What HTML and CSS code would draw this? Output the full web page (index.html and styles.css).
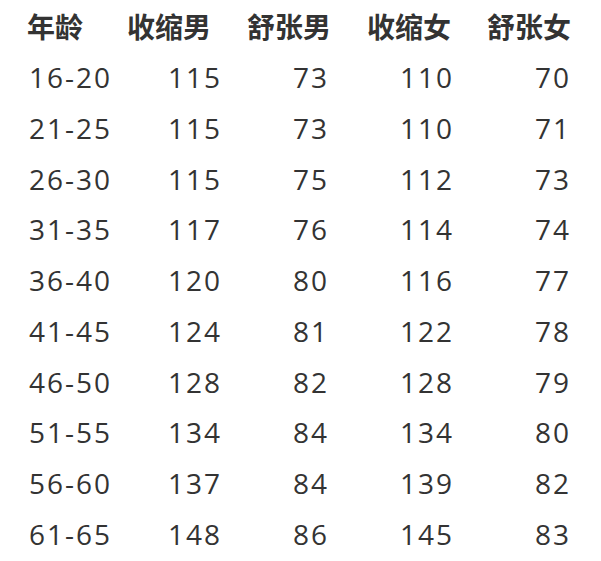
FILE: index.html
```html
<!DOCTYPE html>
<html lang="zh">
<head>
<meta charset="utf-8">
<link rel="stylesheet" href="styles.css">
</head>
<body>
<div class="table">
  <div class="th c1">年龄</div><div class="th c2">收缩男</div><div class="th c3">舒张男</div><div class="th c4">收缩女</div><div class="th c5">舒张女</div>
  <div class="td c1">16-20</div><div class="td c2">115</div><div class="td c3">73</div><div class="td c4">110</div><div class="td c5">70</div>
  <div class="td c1">21-25</div><div class="td c2">115</div><div class="td c3">73</div><div class="td c4">110</div><div class="td c5">71</div>
  <div class="td c1">26-30</div><div class="td c2">115</div><div class="td c3">75</div><div class="td c4">112</div><div class="td c5">73</div>
  <div class="td c1">31-35</div><div class="td c2">117</div><div class="td c3">76</div><div class="td c4">114</div><div class="td c5">74</div>
  <div class="td c1">36-40</div><div class="td c2">120</div><div class="td c3">80</div><div class="td c4">116</div><div class="td c5">77</div>
  <div class="td c1">41-45</div><div class="td c2">124</div><div class="td c3">81</div><div class="td c4">122</div><div class="td c5">78</div>
  <div class="td c1">46-50</div><div class="td c2">128</div><div class="td c3">82</div><div class="td c4">128</div><div class="td c5">79</div>
  <div class="td c1">51-55</div><div class="td c2">134</div><div class="td c3">84</div><div class="td c4">134</div><div class="td c5">80</div>
  <div class="td c1">56-60</div><div class="td c2">137</div><div class="td c3">84</div><div class="td c4">139</div><div class="td c5">82</div>
  <div class="td c1">61-65</div><div class="td c2">148</div><div class="td c3">86</div><div class="td c4">145</div><div class="td c5">83</div>
</div>
</body>
</html>
```

FILE: styles.css
```css
html, body {
  margin: 0;
  padding: 0;
  background: #ffffff;
}
body {
  width: 601px;
  height: 561px;
  overflow: hidden;
  color: #333333;
  font-family: "Open Sans", "Noto Sans CJK SC", sans-serif;
}
.table {
  display: grid;
  grid-template-columns: 100px 120px 120px 120px 114px;
  grid-template-rows: 51px;
  grid-auto-rows: 50.78px;
  padding: 1px 0 0 27px;
}
.th {
  font-family: "Noto Sans CJK SC", sans-serif;
  font-weight: 700;
  font-size: 28px;
  line-height: 50px;
  text-align: left;
  white-space: nowrap;
}
.td {
  font-size: 28px;
  line-height: 50px;
  letter-spacing: 2px;
  text-align: right;
  white-space: nowrap;
}
.td.c1 { text-align: left; padding-left: 2px; }
.td.c2 { padding-right: 25px; }
.td.c3 { padding-right: 38px; }
.td.c4 { padding-right: 33px; }
.td.c5 { padding-right: 30px; }
```
